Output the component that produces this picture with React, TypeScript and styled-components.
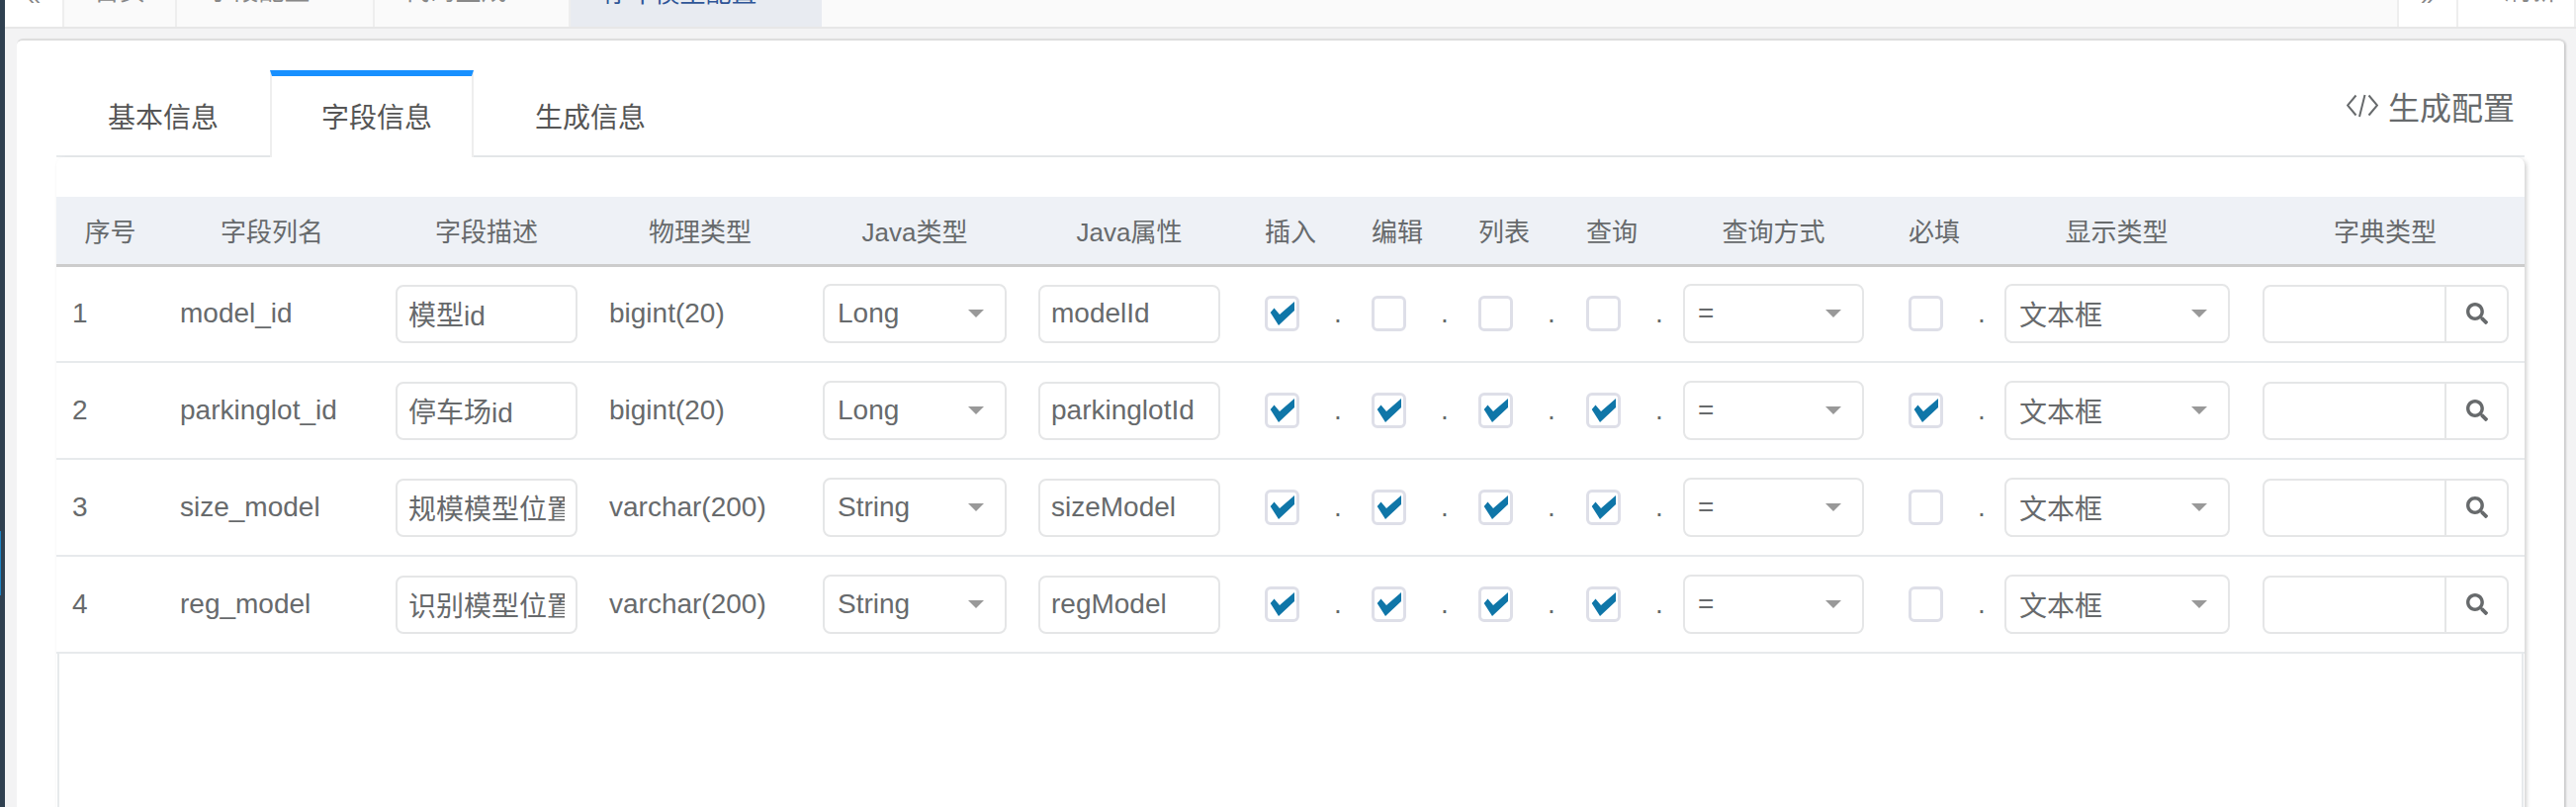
import React from 'react';
import styled, { createGlobalStyle } from 'styled-components';
import { FaSearch } from 'react-icons/fa';

const GlobalStyle = createGlobalStyle`
  html, body {
    margin: 0;
    height: 816px;
    overflow: hidden;
    background: #f3f3f4;
    color: #676a6c;
    font-family: "Liberation Sans", "Noto Sans CJK SC", sans-serif;
  }
  * { box-sizing: border-box; }
`;

const Page = styled.div`
  display: flex;
  height: 816px;
  overflow: hidden;
`;

const Sidebar = styled.div`
  flex: 0 0 5px;
  background: #2f4050;
`;

const SideMarker = styled.div`
  width: 1px;
  height: 65px;
  margin-top: 537px;
  background: #1c84c6;
`;

const Main = styled.div`
  flex: 1;
  min-width: 0;
`;

const TopBar = styled.div`
  display: flex;
  height: 29px;
  overflow: hidden;
  background: #fafafa;
  border-bottom: 2px solid #e7e7e7;
  font-size: 26px;
  line-height: 30px;
`;

const TopCell = styled.div<{ $width: number; $active?: boolean; $white?: boolean; $grow?: boolean; $arrow?: boolean }>`
  display: flex;
  flex: ${(p) => (p.$grow ? 1 : `0 0 ${p.$width}px`)};
  align-items: flex-end;
  justify-content: center;
  gap: 20px;
  height: ${(p) => (p.$active ? 29 : 27)}px;
  padding-bottom: ${(p) => (p.$arrow ? 16 : 21)}px;
  white-space: nowrap;
  background: ${(p) => (p.$active ? '#e8ebf1' : p.$white ? '#fff' : '#fafafa')};
  color: ${(p) => (p.$active ? '#2f5597' : '#888')};
  border-right: ${(p) => (p.$active ? 0 : 2)}px solid #eee;
`;

const TopClose = styled.span`
  font-size: 22px;
  color: #ccc;
`;

const Content = styled.div`
  padding: 10px 12px 0;
`;

const Card = styled.div`
  height: 800px;
  padding: 30px 40px 0;
  background: #fff;
  border-top: 2px solid #ddd;
  border-radius: 6px;
  box-shadow: 2px 1px 2px rgba(0, 0, 0, 0.16);
`;

const TabStrip = styled.div`
  display: flex;
  justify-content: space-between;
  height: 88px;
  border-bottom: 2px solid #e7eaec;
`;

const Tabs = styled.div`
  display: flex;
  align-items: flex-start;
  gap: 10px;
`;

const Tab = styled.div<{ $active?: boolean }>`
  height: ${(p) => (p.$active ? 88 : 86)}px;
  padding: 0 40px 0 50px;
  font-size: 28px;
  line-height: 86px;
  color: #555;
  background: #fff;
  border-top: 6px solid ${(p) => (p.$active ? '#1890ff' : 'transparent')};
  border-left: 2px solid ${(p) => (p.$active ? '#eee' : 'transparent')};
  border-right: 2px solid ${(p) => (p.$active ? '#eee' : 'transparent')};
`;

const GenerateButton = styled.div`
  display: flex;
  align-items: center;
  gap: 10px;
  height: 72px;
  padding-right: 10px;
  font-size: 32px;
  color: #676a6c;
`;

const Panel = styled.div`
  height: 680px;
  padding-top: 40px;
  border-radius: 8px 8px 0 0;
  box-shadow: 2px 2px 4px rgba(0, 0, 0, 0.18);
`;

const Table = styled.table`
  width: 2496px;
  table-layout: fixed;
  border-collapse: collapse;
`;

const HeadRow = styled.tr`
  height: 69px;
  background: #eef1f6;
  border-bottom: 3px solid #ccc;
`;

const HeadCell = styled.th<{ $left?: boolean }>`
  padding: 0 0 0 ${(p) => (p.$left ? 29 : 0)}px;
  font-size: 26px;
  font-weight: normal;
  color: #676a6c;
  text-align: ${(p) => (p.$left ? 'left' : 'center')};
`;

const Row = styled.tr`
  height: 98px;
  border-bottom: 2px solid #e7eaec;
`;

const Cell = styled.td<{ $pad?: number }>`
  padding: 0 16px 0 ${(p) => p.$pad ?? 16}px;
  font-size: 28px;
  color: #676a6c;
  overflow: visible;
  white-space: nowrap;
`;

const TextInput = styled.input`
  display: block;
  width: 100%;
  height: 59px;
  padding: 0 11px;
  font: inherit;
  color: #676a6c;
  background: #fff;
  border: 2px solid #e5e6e7;
  border-radius: 8px;
  outline: none;
`;

const SelectBox = styled.div`
  display: flex;
  align-items: center;
  justify-content: space-between;
  height: 60px;
  padding: 0 21px 0 13px;
  background: #fff;
  border: 2px solid #e5e6e7;
  border-radius: 8px;
`;

const Caret = styled.span`
  width: 0;
  height: 0;
  border-left: 8px solid transparent;
  border-right: 8px solid transparent;
  border-top: 8px solid #999;
`;

const CheckWrap = styled.div`
  display: flex;
  align-items: center;
`;

const CheckBox = styled.span`
  display: block;
  flex: 0 0 35px;
  width: 35px;
  height: 36px;
  background: #fff;
  border: 3px solid #dedfe8;
  border-radius: 6px;
`;

const CheckMark = styled.svg`
  display: block;
`;

const Dot = styled.span`
  margin-left: 35px;
`;

const DictGroup = styled.div`
  display: flex;
  height: 59px;
  border: 2px solid #e5e6e7;
  border-radius: 8px;
`;

const DictField = styled.div`
  flex: 1;
`;

const DictButton = styled.div`
  display: flex;
  flex: 0 0 63px;
  align-items: center;
  justify-content: center;
  color: #676a6c;
  border-left: 2px solid #e5e6e7;
`;

const Filler = styled.div`
  height: 200px;
  margin: 0 1px;
  border-left: 2px solid #e7eaec;
  border-right: 2px solid #e7eaec;
`;

const columns = [109, 218, 216, 216, 218, 216, 108, 108, 109, 111, 215, 109, 261, 282];

const heads = [
  { text: '序号' },
  { text: '字段列名' },
  { text: '字段描述' },
  { text: '物理类型' },
  { text: 'Java类型' },
  { text: 'Java属性' },
  { text: '插入', left: true },
  { text: '编辑', left: true },
  { text: '列表', left: true },
  { text: '查询', left: true },
  { text: '查询方式' },
  { text: '必填', left: true },
  { text: '显示类型' },
  { text: '字典类型' },
];

const rows = [
  { no: 1, column: 'model_id', desc: '模型id', type: 'bigint(20)', javaType: 'Long', attr: 'modelId', checks: [true, false, false, false], required: false },
  { no: 2, column: 'parkinglot_id', desc: '停车场id', type: 'bigint(20)', javaType: 'Long', attr: 'parkinglotId', checks: [true, true, true, true], required: true },
  { no: 3, column: 'size_model', desc: '规模模型位置', type: 'varchar(200)', javaType: 'String', attr: 'sizeModel', checks: [true, true, true, true], required: false },
  { no: 4, column: 'reg_model', desc: '识别模型位置', type: 'varchar(200)', javaType: 'String', attr: 'regModel', checks: [true, true, true, true], required: false },
];

function Check({ checked }: { checked: boolean }) {
  return (
    <CheckWrap>
      <CheckBox>
        {checked && (
          <CheckMark width="29" height="30" viewBox="3 3 29 30">
            <polygon points="5.7,17 9.5,12.5 15,19 30,6 30,15 14,30" fill="#0f76a8" />
          </CheckMark>
        )}
      </CheckBox>
      <Dot>.</Dot>
    </CheckWrap>
  );
}

function Select({ value }: { value: string }) {
  return (
    <SelectBox>
      <span>{value}</span>
      <Caret />
    </SelectBox>
  );
}

export default function App() {
  return (
    <Page>
      <GlobalStyle />
      <Sidebar>
        <SideMarker />
      </Sidebar>
      <Main>
        <TopBar>
          <TopCell $width={60} $white $arrow>«</TopCell>
          <TopCell $width={114}>首页</TopCell>
          <TopCell $width={200}>字段配置<TopClose>×</TopClose></TopCell>
          <TopCell $width={198}>代码生成<TopClose>×</TopClose></TopCell>
          <TopCell $width={254} $active>停车模型配置<TopClose>×</TopClose></TopCell>
          <TopCell $width={0} $grow />
          <TopCell $width={60} $white $arrow>»</TopCell>
          <TopCell $width={119} $white>⟳ 刷新</TopCell>
        </TopBar>
        <Content>
          <Card>
            <TabStrip>
              <Tabs>
                <Tab>基本信息</Tab>
                <Tab $active>字段信息</Tab>
                <Tab>生成信息</Tab>
              </Tabs>
              <GenerateButton>
                <svg width="32" height="24" viewBox="0 0 32 24" fill="none" stroke="#676a6c" strokeWidth="2">
                  <path d="M9.5 1.5 1 11.5l8.5 10M22.5 1.5l8.5 10-8.5 10M18.5 1 13 23" />
                </svg>
                生成配置
              </GenerateButton>
            </TabStrip>
            <Panel>
              <Table>
                <colgroup>
                  {columns.map((width, i) => (
                    <col key={i} width={width} />
                  ))}
                </colgroup>
                <thead>
                  <HeadRow>
                    {heads.map((head) => (
                      <HeadCell key={head.text} $left={head.left}>{head.text}</HeadCell>
                    ))}
                  </HeadRow>
                </thead>
                <tbody>
                  {rows.map((row) => (
                    <Row key={row.no}>
                      <Cell>{row.no}</Cell>
                      <Cell>{row.column}</Cell>
                      <Cell><TextInput readOnly value={row.desc} /></Cell>
                      <Cell>{row.type}</Cell>
                      <Cell><Select value={row.javaType} /></Cell>
                      <Cell><TextInput readOnly value={row.attr} /></Cell>
                      {row.checks.map((checked, i) => (
                        <Cell key={i} $pad={29}><Check checked={checked} /></Cell>
                      ))}
                      <Cell><Select value="=" /></Cell>
                      <Cell $pad={29}><Check checked={row.required} /></Cell>
                      <Cell $pad={17}><Select value="文本框" /></Cell>
                      <Cell $pad={17}>
                        <DictGroup>
                          <DictField />
                          <DictButton><FaSearch size={22} /></DictButton>
                        </DictGroup>
                      </Cell>
                    </Row>
                  ))}
                </tbody>
              </Table>
              <Filler />
            </Panel>
          </Card>
        </Content>
      </Main>
    </Page>
  );
}
